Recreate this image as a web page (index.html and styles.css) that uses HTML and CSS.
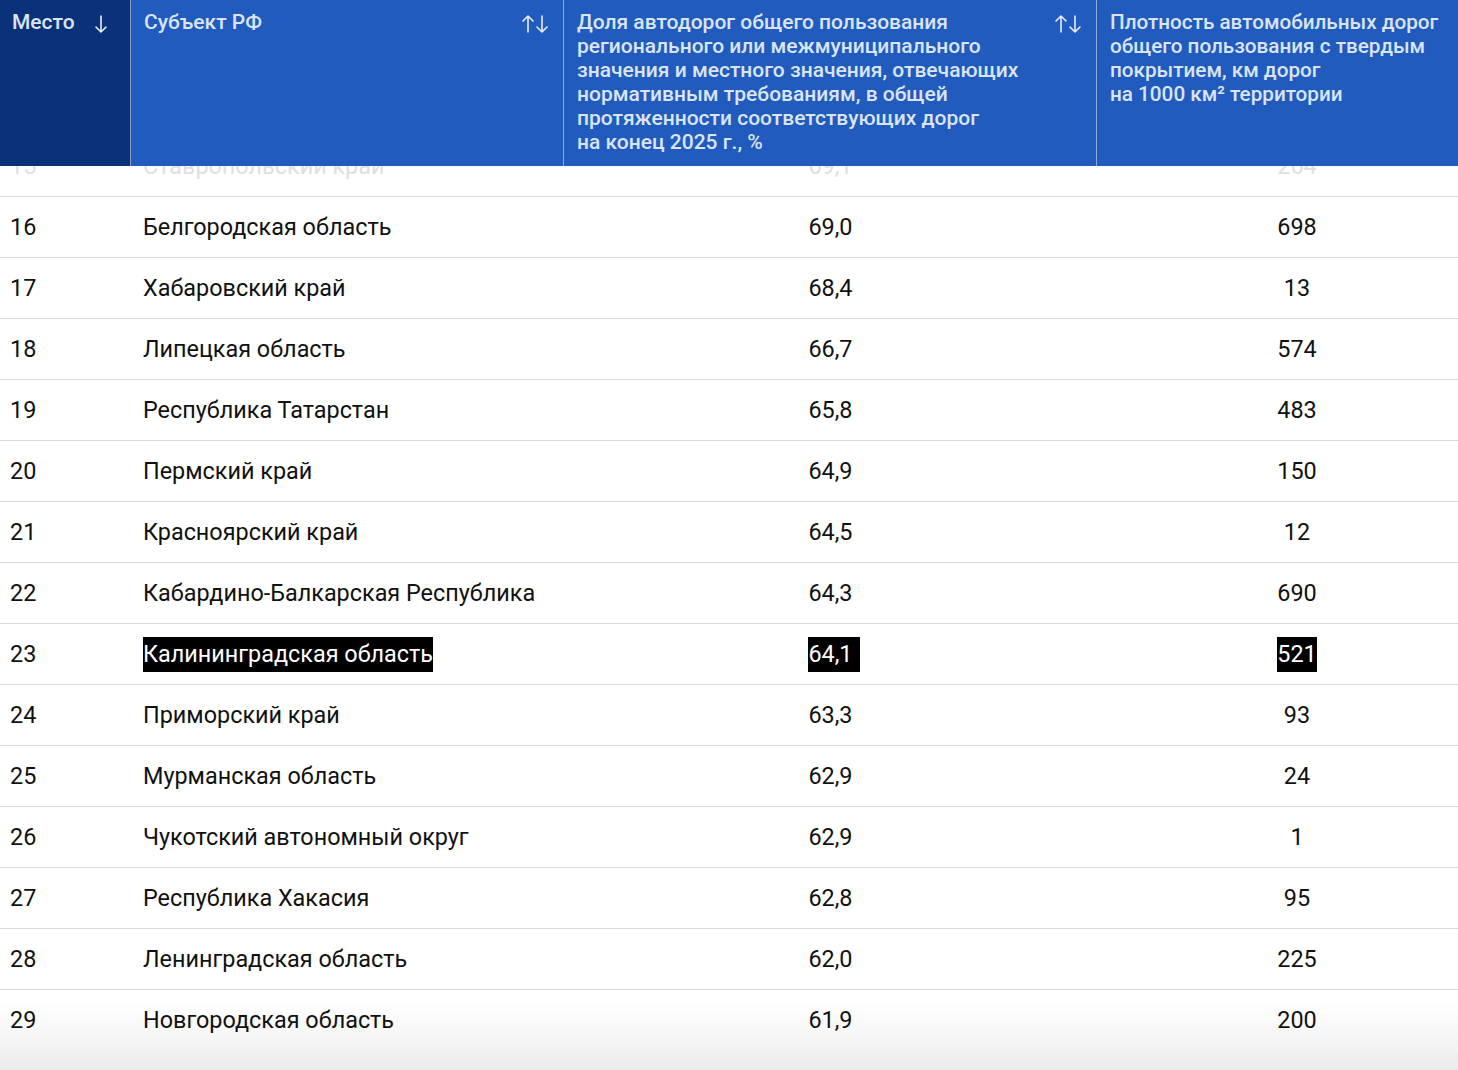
FILE: index.html
```html
<!DOCTYPE html>
<html lang="ru">
<head>
<meta charset="utf-8">
<title>Рейтинг регионов</title>
<link rel="stylesheet" href="styles.css">
</head>
<body>
<div class="viewport">
  <div class="table">
    <div class="thead">
      <div class="th th-place">
        <span class="th-text">Место</span>
        <svg class="sort sort-down" width="14" height="20" viewBox="0 0 14 20"><path d="M7 2 V18 M2 13 L7 18 L12 13" fill="none" stroke="currentColor" stroke-width="1.6" stroke-linecap="round" stroke-linejoin="round"/></svg>
      </div>
      <div class="th">
        <span class="th-text">Субъект РФ</span>
        <svg class="sort" width="26" height="20" viewBox="0 0 26 20"><path d="M6 18 V2 M1 7 L6 2 L11 7 M20 2 V18 M15 13 L20 18 L25 13" fill="none" stroke="currentColor" stroke-width="1.6" stroke-linecap="round" stroke-linejoin="round"/></svg>
      </div>
      <div class="th">
        <span class="th-text">Доля автодорог общего пользования<br>регионального или межмуниципального<br>значения и местного значения, отвечающих<br>нормативным требованиям, в общей<br>протяженности соответствующих дорог<br>на конец 2025 г., %</span>
        <svg class="sort" width="26" height="20" viewBox="0 0 26 20"><path d="M6 18 V2 M1 7 L6 2 L11 7 M20 2 V18 M15 13 L20 18 L25 13" fill="none" stroke="currentColor" stroke-width="1.6" stroke-linecap="round" stroke-linejoin="round"/></svg>
      </div>
      <div class="th th-last">
        <span class="th-text">Плотность автомобильных дорог<br>общего пользования с твердым<br>покрытием, км дорог<br>на 1000 км² территории</span>
      </div>
    </div>
    <div class="tbody">
      <div class="rows">
        <div class="tr faded"><div class="td td-place">15</div><div class="td td-name">Ставропольский край</div><div class="td td-num">69,1</div><div class="td td-num">264</div></div>
        <div class="tr"><div class="td td-place">16</div><div class="td td-name">Белгородская область</div><div class="td td-num">69,0</div><div class="td td-num">698</div></div>
        <div class="tr"><div class="td td-place">17</div><div class="td td-name">Хабаровский край</div><div class="td td-num">68,4</div><div class="td td-num">13</div></div>
        <div class="tr"><div class="td td-place">18</div><div class="td td-name">Липецкая область</div><div class="td td-num">66,7</div><div class="td td-num">574</div></div>
        <div class="tr"><div class="td td-place">19</div><div class="td td-name">Республика Татарстан</div><div class="td td-num">65,8</div><div class="td td-num">483</div></div>
        <div class="tr"><div class="td td-place">20</div><div class="td td-name">Пермский край</div><div class="td td-num">64,9</div><div class="td td-num">150</div></div>
        <div class="tr"><div class="td td-place">21</div><div class="td td-name">Красноярский край</div><div class="td td-num">64,5</div><div class="td td-num">12</div></div>
        <div class="tr"><div class="td td-place">22</div><div class="td td-name">Кабардино-Балкарская Республика</div><div class="td td-num">64,3</div><div class="td td-num">690</div></div>
        <div class="tr"><div class="td td-place">23</div><div class="td td-name"><span class="mark">Калининградская область</span></div><div class="td td-num"><span class="mark mark-wide">64,1</span></div><div class="td td-num"><span class="mark">521</span></div></div>
        <div class="tr"><div class="td td-place">24</div><div class="td td-name">Приморский край</div><div class="td td-num">63,3</div><div class="td td-num">93</div></div>
        <div class="tr"><div class="td td-place">25</div><div class="td td-name">Мурманская область</div><div class="td td-num">62,9</div><div class="td td-num">24</div></div>
        <div class="tr"><div class="td td-place">26</div><div class="td td-name">Чукотский автономный округ</div><div class="td td-num">62,9</div><div class="td td-num">1</div></div>
        <div class="tr"><div class="td td-place">27</div><div class="td td-name">Республика Хакасия</div><div class="td td-num">62,8</div><div class="td td-num">95</div></div>
        <div class="tr"><div class="td td-place">28</div><div class="td td-name">Ленинградская область</div><div class="td td-num">62,0</div><div class="td td-num">225</div></div>
        <div class="tr tr-fade"><div class="td td-place">29</div><div class="td td-name">Новгородская область</div><div class="td td-num">61,9</div><div class="td td-num">200</div></div>
      </div>
    </div>
    <div class="tfoot"></div>
  </div>
</div>
</body>
</html>
```

FILE: styles.css
```css
html, body {
  margin: 0;
  padding: 0;
  background: #ffffff;
}

.viewport {
  width: 1458px;
  height: 1070px;
  overflow: hidden;
  font-family: Roboto, "Liberation Sans", Arial, sans-serif;
}

.table {
  width: 1497px;
}

.thead {
  display: grid;
  grid-template-columns: 131px 433px 533px 400px;
  height: 166px;
  background: #215bbd;
}

.th {
  display: flex;
  justify-content: space-between;
  align-items: flex-start;
  padding: 10px 15px 0 13px;
  border-right: 1px solid #8fa9dc;
  color: #d9e4f6;
  font-size: 21px;
  font-weight: 500;
  line-height: 24px;
}

.th-place {
  background: #0b3278;
  padding-left: 12px;
  padding-right: 22px;
  border-right-color: #8b9cc4;
}

.th-last {
  border-right: none;
  font-size: 20.7px;
}

.th-text {
  white-space: nowrap;
}

.sort {
  flex: none;
  margin-top: 4px;
  color: #e6edf9;
}

.tbody {
  height: 884px;
  overflow: hidden;
}

.rows {
  margin-top: -30px;
}

.tr {
  display: grid;
  grid-template-columns: 131px 433px 533px 400px;
  height: 60px;
  border-bottom: 1px solid #d9d9d9;
  align-items: center;
  color: #111111;
  font-size: 23.4px;
  line-height: 27px;
}

.td-place {
  padding-left: 10px;
}

.td-name {
  padding-left: 12px;
}

.td-num {
  text-align: center;
}

.faded {
  color: #e0e0e0;
}

.tr-fade {
  background: linear-gradient(#ffffff 0%, #ffffff 20%, #f2f2f2 100%);
}

.mark {
  display: inline-block;
  background: #000000;
  color: #ffffff;
  line-height: 35px;
}

.mark-wide {
  padding-right: 7px;
  margin-left: 7px;
}

.tfoot {
  height: 20px;
  background: linear-gradient(#f0f0f0, #ebebeb);
}
```
